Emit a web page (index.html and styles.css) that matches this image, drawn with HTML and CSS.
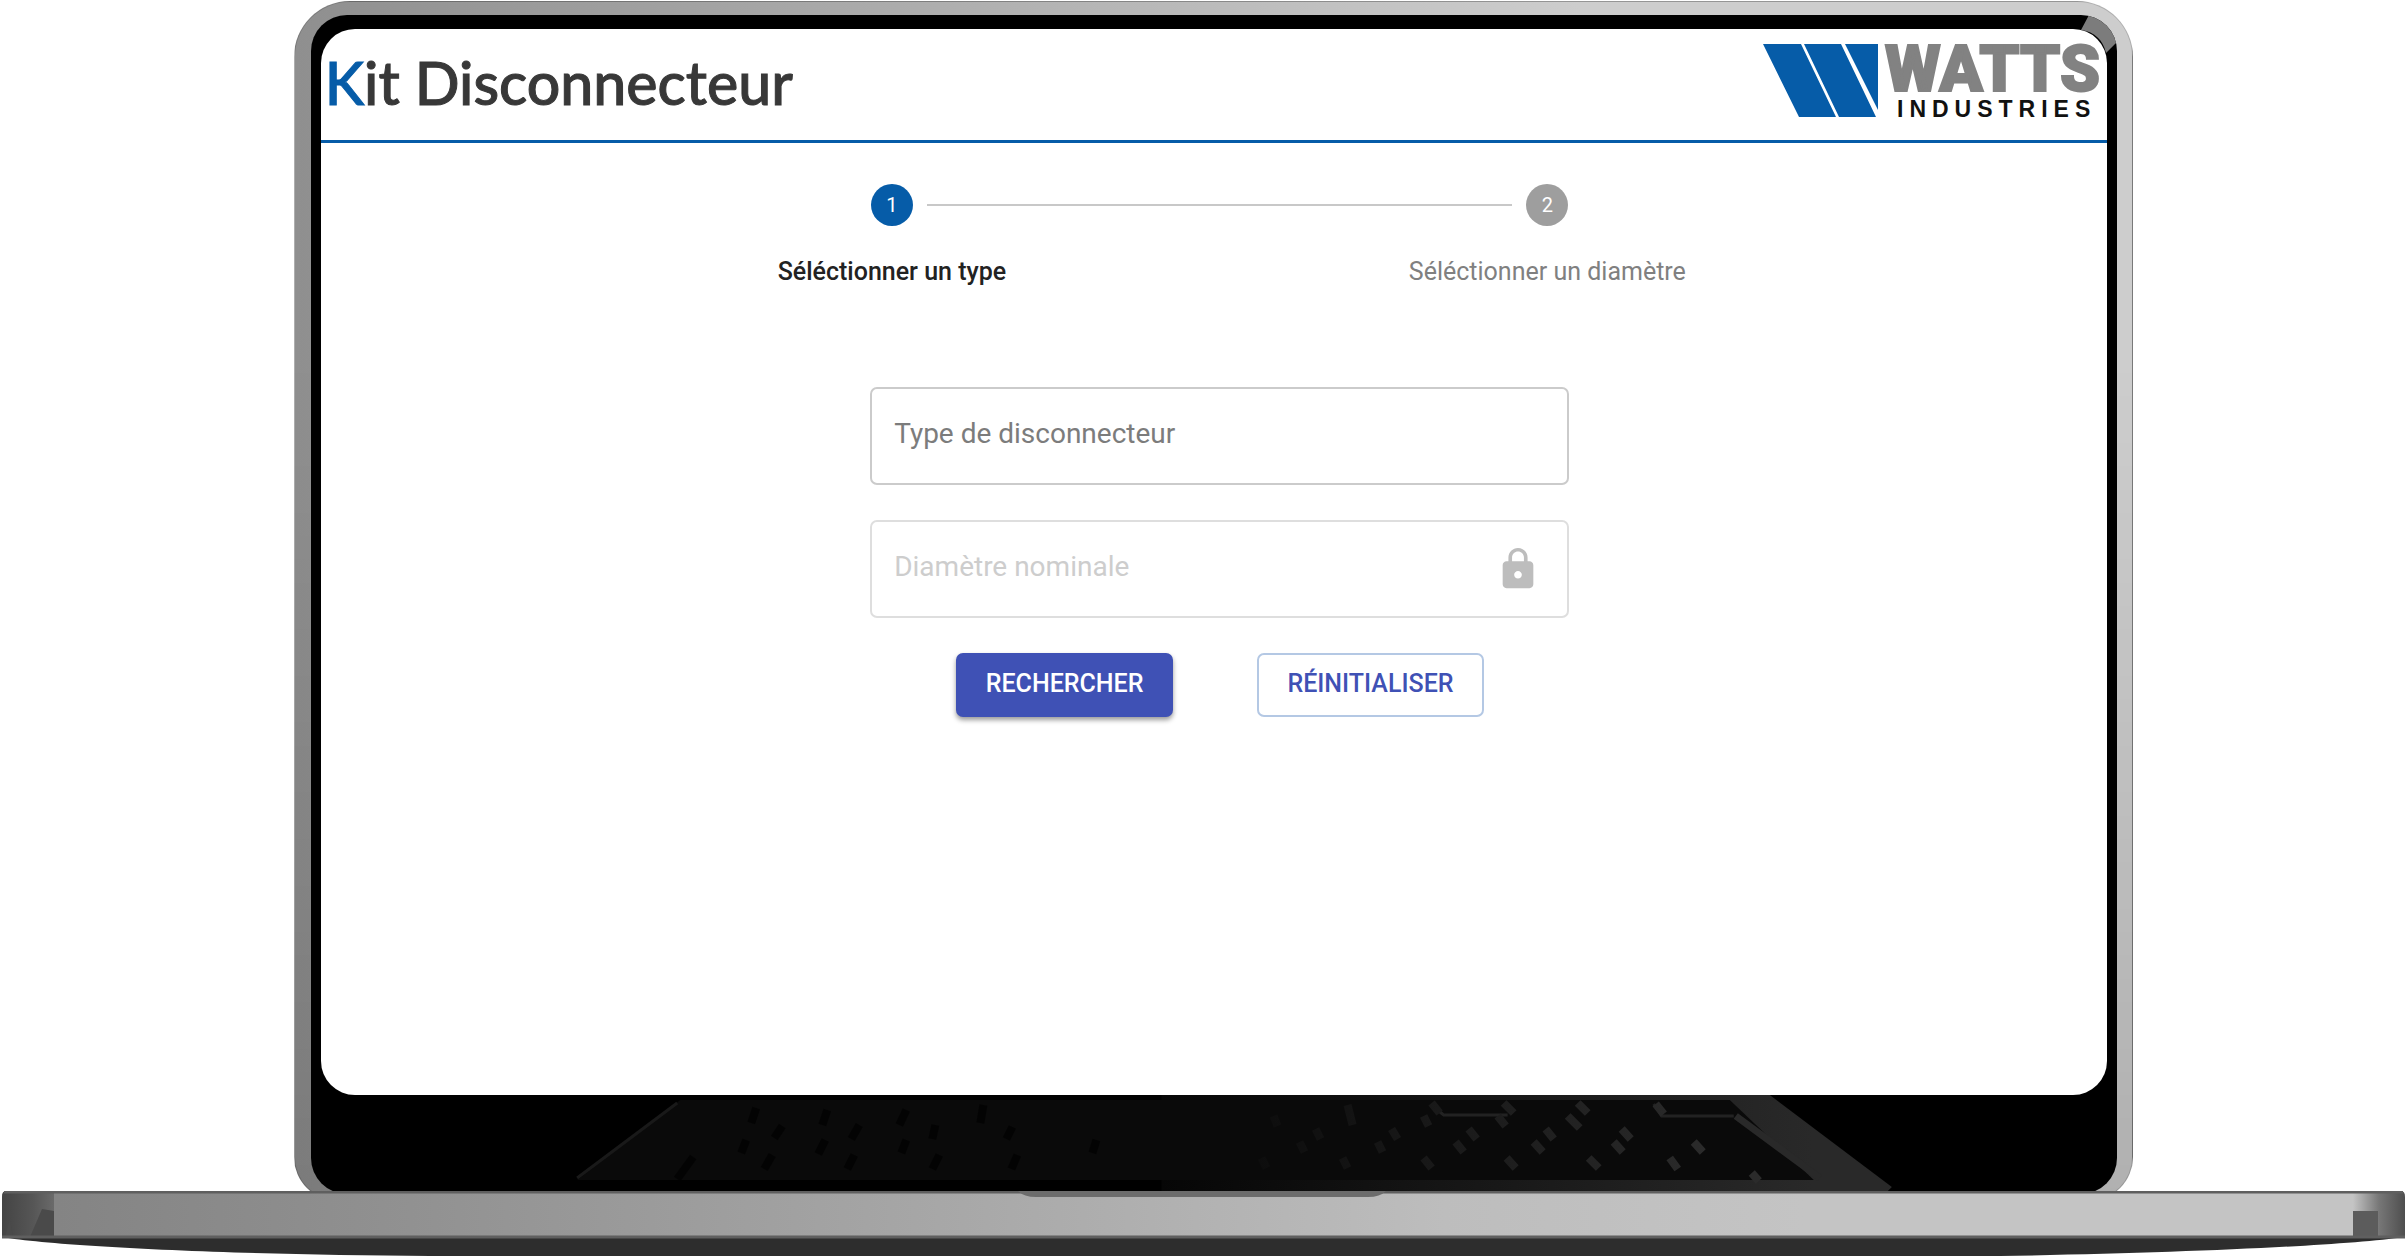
FILE: index.html
```html
<!DOCTYPE html>
<html lang="fr">

<head>
    <meta charset="UTF-8">
    <meta name="viewport" content="width=device-width, initial-scale=1.0">
    <title>Kit Disconnecteur</title>
    <link rel="stylesheet" href="styles.css">
</head>

<body>
    <div class="laptop">
        <div class="lid">
            <div class="bezel">
                <svg class="glare" width="36" height="38" viewBox="0 0 36 38" aria-hidden="true">
                    <path d="M8 0C24 2 34 12 36 27L25 38C22 25 14 17 0 15Z" fill="#7c7c7c"/>
                </svg>

                <div class="screen">
                    <header class="header">
                        <h1 class="title"><span class="title-first">K</span>it Disconnecteur</h1>
                        <svg class="logo" width="340" height="84" viewBox="0 0 340 84" role="img" aria-label="Watts Industries">
                            <path d="M0 1H38L73 74H36ZM41 1H78L113 74H76ZM82 1H115V67Z" fill="#065ca8"/>
                            <text class="logo-name" x="122" y="48">WATTS</text>
                            <text class="logo-sub" x="134" y="74">INDUSTRIES</text>
                        </svg>
                    </header>

                    <main class="content">
                        <ol class="stepper">
                            <li class="step step-active">
                                <span class="step-number">1</span>
                                <span class="step-label">Séléctionner un type</span>
                            </li>
                            <li class="step-line"></li>
                            <li class="step">
                                <span class="step-number">2</span>
                                <span class="step-label">Séléctionner un diamètre</span>
                            </li>
                        </ol>

                        <form class="form">
                            <div class="field">
                                <label for="type">Type de disconnecteur</label>
                                <input type="text" id="type" name="type">
                            </div>
                            <div class="field field-disabled">
                                <label for="diametre">Diamètre nominale</label>
                                <input type="text" id="diametre" name="diametre" disabled>
                                <svg class="lock" width="46" height="46" viewBox="0 0 24 24" aria-hidden="true">
                                    <path d="M18 8h-1V6c0-2.76-2.24-5-5-5S7 3.240 7 6v2H6c-1.100 0-2 .9-2 2v10c0 1.100.9 2 2 2h12c1.100 0 2-.9 2-2V10c0-1.100-.9-2-2-2zm-6 9c-1.100 0-2-.9-2-2s.9-2 2-2 2 .9 2 2-.9 2-2 2zm3.100-9H8.900V6c0-1.710 1.390-3.100 3.100-3.100s3.100 1.390 3.100 3.100v2z" fill="#bdbdbd"/>
                                </svg>
                            </div>
                            <div class="buttons">
                                <button type="submit" class="btn btn-primary">RECHERCHER</button>
                                <button type="reset" class="btn btn-outline">RÉINITIALISER</button>
                            </div>
                        </form>
                    </main>
                </div>

                <!-- keyboard reflection -->
                <svg class="chin" viewBox="0 0 1805 96" preserveAspectRatio="none" aria-hidden="true">
                    <defs>
                        <linearGradient id="edge" gradientUnits="userSpaceOnUse" x1="850" y1="0" x2="1500" y2="0">
                            <stop offset="0" stop-color="#060606"/>
                            <stop offset="1" stop-color="#292929"/>
                        </linearGradient>
                        <linearGradient id="keys" gradientUnits="userSpaceOnUse" x1="900" y1="0" x2="1400" y2="0">
                            <stop offset="0" stop-color="#0a0a0a"/>
                            <stop offset="1" stop-color="#2b2b2b"/>
                        </linearGradient>
                    </defs>
                    <path d="M850 0H1458L1580 92L1576 96H850Z" fill="url(#edge)"/>
                    <path d="M369 5H1418L1502 85H266Z" fill="#0a0a0a"/>
                    <path d="M366 8L266 83" stroke="#191919" stroke-width="3"/>
                    <path d="M1424 21L1508 83" stroke="#292929" stroke-width="7"/>
                    <path d="M1342 9L1350 21H1422M1120 10L1132 20H1196" stroke="#222" stroke-width="3" fill="none"/>
                    <g stroke="url(#keys)" stroke-width="8">
                        <path d="M1120 8l8 10M1192 8l10 10M1266 8l10 10M1344 9l8 10"/>
                        <path d="M962 21l4 10M1036 10l5 20M1112 21l5 10M1186 21l8 10M1256 21l12 12"/>
                        <path d="M1004 34l5 10M1080 34l6 10M1157 34l8 10M1234 34l8 10M1310 34l9 10"/>
                        <path d="M988 47l5 10M1066 47l5 10M1144 47l8 10M1222 47l9 10M1302 47l9 10M1382 47l9 10"/>
                        <path d="M950 63l5 10M1031 63l5 10M1112 63l8 10M1195 63l9 10M1277 63l10 10M1358 63l8 11M1440 78l7 8"/>
                    </g>
                    <path d="M445 13l-5 15M516 15l-5 15M595 15l-7 15M672 10l-3 18M471 31l-8 12M548 30l-8 14M624 30l-3 14M701 32l-6 12M435 45l-5 13M514 45l-7 14M595 45l-5 13M382 62l-16 22M461 60l-8 14M543 60l-7 14M628 60l-7 14M706 60l-6 14M785 45l-4 13" stroke="#000" stroke-width="8" opacity="0.6"/>
                </svg>
            </div>
        </div>

        <svg class="base" viewBox="0 0 2407 66" preserveAspectRatio="none" aria-hidden="true">
            <defs>
                <linearGradient id="metal">
                    <stop offset="0" stop-color="#828282"/>
                    <stop offset="0.17" stop-color="#919191"/>
                    <stop offset="0.45" stop-color="#adadad"/>
                    <stop offset="0.6" stop-color="#bdbdbd"/>
                    <stop offset="0.75" stop-color="#c4c4c4"/>
                    <stop offset="1" stop-color="#c4c4c4"/>
                </linearGradient>
                <linearGradient id="capLeft">
                    <stop offset="0" stop-color="#444"/>
                    <stop offset="0.6" stop-color="#565656"/>
                    <stop offset="1" stop-color="#6a6a6a"/>
                </linearGradient>
                <linearGradient id="capRight">
                    <stop offset="0" stop-color="#c4c4c4"/>
                    <stop offset="0.5" stop-color="#777"/>
                    <stop offset="1" stop-color="#4e4e4e"/>
                </linearGradient>
            </defs>
            <path d="M2 46C60 56 240 64 430 65H2000C2180 62 2340 55 2405 46Z" fill="#2d2d2d"/>
            <path d="M6 0H2401Q2405 0 2405 6V46H2V6Q2 0 6 0Z" fill="url(#metal)"/>
            <path d="M6 0H54V46H2V6Q2 0 6 0Z" fill="url(#capLeft)"/>
            <path d="M30 46L42 18L54 20V46ZM5 46L10 28L13 46Z" fill="#4a4a4a"/>
            <path d="M2353 0H2401Q2405 0 2405 6V46H2353Z" fill="url(#capRight)"/>
            <path d="M2353 20H2378V46H2353Z" fill="#5c5c5c"/>
            <path d="M4 1H2403M2 46H2405" stroke="#5f5f5f" stroke-width="3"/>
            <path d="M1018 0H1386Q1380 6 1368 6H1036Q1024 6 1018 0Z" fill="#6c6c6c"/>
        </svg>
    </div>
</body>

</html>
```
FILE: styles.css
```css
* {
    box-sizing: border-box;
}

body {
    margin: 0;
    background-color: #fff;
    font-family: Roboto, "Liberation Sans", sans-serif;
}

.laptop {
    display: flex;
    flex-direction: column;
    min-height: 100vh;
}

.lid {
    display: flex;
    flex: 1;
    margin: 1px 11.4% -10px 12.2%;
    padding: 13px 15px 6px 16px;
    border: 1px solid rgba(0, 0, 0, 0.15);
    border-radius: 56px 56px 44px 44px;
    background: linear-gradient(rgba(0, 0, 0, 0) 30%, rgba(0, 0, 0, 0.14)), linear-gradient(90deg, #8f8f8f, #cdcdcd 70%);
}

.bezel {
    position: relative;
    display: flex;
    flex: 1;
    flex-direction: column;
    padding: 14px 10px 3px;
    border-radius: 36px;
    background-color: #000;
    overflow: hidden;
}

.glare {
    position: absolute;
    top: 0;
    right: 0;
}

.screen {
    position: relative;
    flex: 1;
    border-radius: 34px;
    background-color: #fff;
    overflow: hidden;
}

.header {
    display: flex;
    justify-content: space-between;
    align-items: flex-start;
    height: 114px;
    padding: 14px 4px 0 4px;
    border-bottom: 3px solid #065ca8;
}

.title {
    margin: 0;
    color: #383838;
    font-family: Lato, sans-serif;
    font-size: 59px;
    font-weight: 500;
    line-height: 80px;
    -webkit-text-stroke: 1px currentColor;
}

.title-first {
    color: #065ca8;
}

.logo {
    overflow: visible;
}

.logo-name {
    fill: #828282;
    stroke: #828282;
    stroke-width: 2px;
    font-family: Roboto, sans-serif;
    font-size: 64px;
    font-weight: 900;
}

.logo-sub {
    fill: #111;
    font-family: "Liberation Sans", sans-serif;
    font-size: 23px;
    font-weight: 700;
    letter-spacing: 6px;
}

.content {
    padding: 41px 0 40px 12px;
}

.stepper {
    display: flex;
    justify-content: center;
    margin: 0;
    padding: 0;
    list-style: none;
}

.step {
    display: flex;
    flex-direction: column;
    align-items: center;
    gap: 31px;
    width: 42px;
}

.step-number {
    width: 42px;
    border-radius: 50%;
    background-color: #9e9e9e;
    color: #fff;
    font-size: 20px;
    line-height: 42px;
    text-align: center;
}

.step-label {
    color: #808080;
    font-size: 25px;
    line-height: 30px;
    white-space: nowrap;
}

.step-active .step-number {
    background-color: #065ca8;
}

.step-active .step-label {
    color: #222;
    font-weight: 500;
}

.step-line {
    width: 33%;
    height: 2px;
    margin: 20px 14px 0;
    background-color: #c8c8c8;
}

.form {
    display: flex;
    flex-direction: column;
    gap: 35px;
    width: 39.4%;
    min-width: 600px;
    margin: 100px auto 0;
}

.field {
    display: flex;
    align-items: center;
    height: 98px;
    padding: 0 26px 0 22px;
    border: 2px solid #cbcbcb;
    border-radius: 7px;
    color: #7c7c7c;
    font-size: 28px;
}

.field label {
    padding-bottom: 6px;
}

.field input {
    flex: 1;
    min-width: 0;
    height: 60px;
    border: none;
    background: none;
    outline: none;
    font: inherit;
}

.field-disabled {
    border-color: #dedede;
    color: #cdcdcd;
}

.buttons {
    display: flex;
    justify-content: center;
    gap: 84px;
}

.btn {
    height: 64px;
    padding: 0 28px 4px;
    border: 2px solid #3f51b5;
    border-radius: 7px;
    font-family: inherit;
    font-size: 25px;
    font-weight: 500;
    cursor: pointer;
}

.btn-primary {
    background-color: #3f51b5;
    box-shadow: 0 3px 5px rgba(0, 0, 0, 0.4);
    color: #fff;
}

.btn-outline {
    border-color: #b4c8e4;
    background-color: #fff;
    color: #3f51b5;
}

.chin {
    display: block;
    width: calc(100% + 20px);
    height: 96px;
    margin: 0 -10px;
}

.base {
    position: relative;
    display: block;
    width: 100%;
    height: 66px;
}
```
